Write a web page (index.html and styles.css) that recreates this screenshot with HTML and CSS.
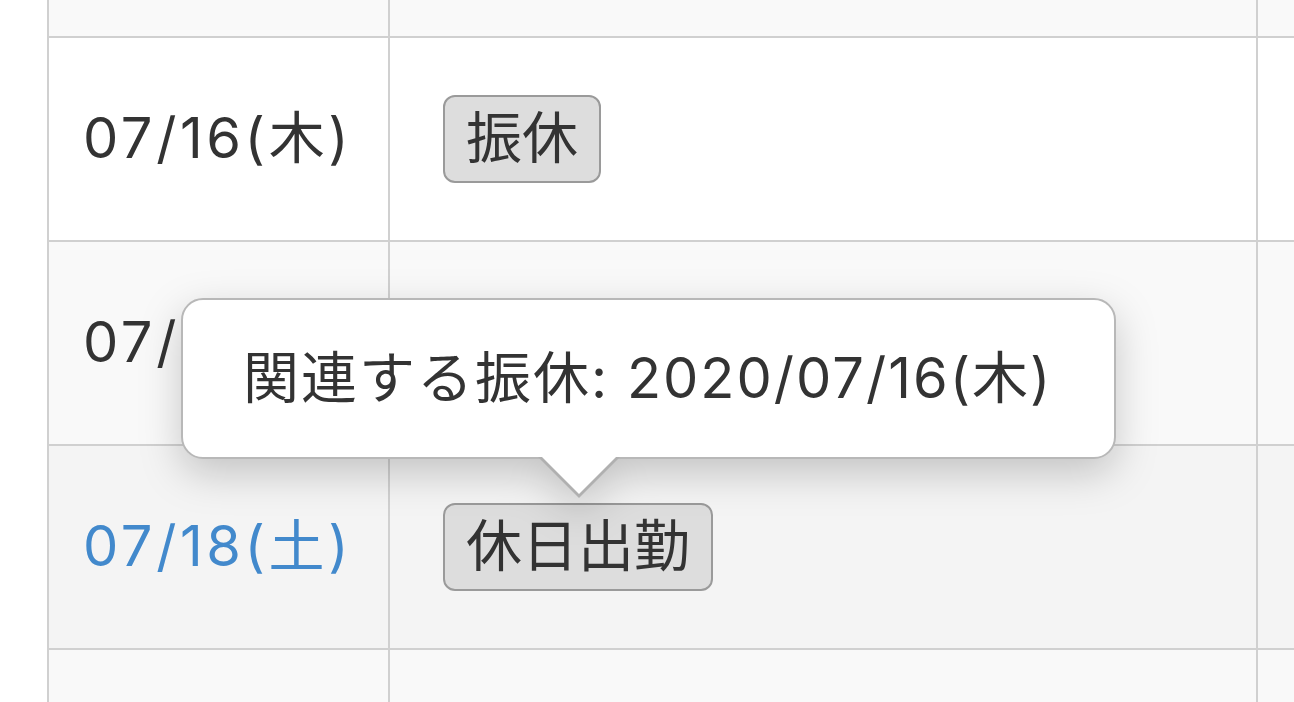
FILE: index.html
```html
<!DOCTYPE html>
<html lang="ja">
<head>
<meta charset="utf-8">
<title>勤務表</title>
<link rel="stylesheet" href="styles.css">
</head>
<body>
<div class="viewport">
  <table class="sheet">
    <colgroup>
      <col class="c-date">
      <col class="c-kind">
      <col class="c-rest">
    </colgroup>
    <tbody>
      <tr class="odd">
        <td class="date">07/15(水)</td>
        <td class="kind"></td>
        <td></td>
      </tr>
      <tr class="even">
        <td class="date">07/16(木)</td>
        <td class="kind"><span class="badge">振休</span></td>
        <td></td>
      </tr>
      <tr class="odd">
        <td class="date">07/17(金)</td>
        <td class="kind"></td>
        <td></td>
      </tr>
      <tr class="hover">
        <td class="date sat">07/18(土)</td>
        <td class="kind">
          <span class="badge-wrap">
            <span class="badge">休日出勤</span>
            <span class="tooltip">関連する振休: 2020/07/16(木)</span>
          </span>
        </td>
        <td></td>
      </tr>
      <tr class="odd">
        <td class="date sun">07/19(日)</td>
        <td class="kind"></td>
        <td></td>
      </tr>
    </tbody>
  </table>
</div>
</body>
</html>
```
FILE: styles.css
```css
html, body {
  margin: 0;
  padding: 0;
  background: #ffffff;
}
body {
  font-family: Inter, "Noto Sans CJK JP", sans-serif;
  color: #333333;
}
.viewport {
  width: 1294px;
  height: 702px;
  overflow: hidden;
  padding-left: 47px;
  box-sizing: border-box;
}
.sheet {
  border-collapse: collapse;
  table-layout: fixed;
  width: 1420px;
  margin-top: -168px;
}
.c-date { width: 341px; }
.c-kind { width: 868px; }
.c-rest { width: 211px; }
.sheet td {
  border: 2px solid #d0d0d0;
  height: 202px;
  padding: 0;
  vertical-align: middle;
  font-size: 56px;
  line-height: 1.2;
}
.odd td { background: #f9f9f9; }
.even td { background: #ffffff; }
.hover td { background: #f4f4f4; }
.date {
  padding-left: 34px !important;
  white-space: nowrap;
  letter-spacing: 3.6px;
}
.date.sat { color: #4289cc; }
.date.sun { color: #d9534f; }
.kind {
  padding-left: 53px !important;
}
.badge-wrap {
  position: relative;
  display: inline-block;
}
.badge {
  display: inline-block;
  background: #dddddd;
  border: 2px solid #9a9a9a;
  border-radius: 12px;
  padding: 8px 21px;
  font-size: 56px;
  line-height: 1.2;
  color: #333333;
}
.tooltip {
  position: absolute;
  left: -262px;
  bottom: calc(100% + 44px);
  white-space: nowrap;
  letter-spacing: 2px;
  background: #ffffff;
  border: 2px solid #b8b8b8;
  border-radius: 22px;
  padding: 45px 62px 45px 60px;
  line-height: 1.2;
  color: #333333;
  filter: drop-shadow(0 14px 20px rgba(0, 0, 0, 0.2));
}
.tooltip::before,
.tooltip::after {
  content: "";
  position: absolute;
  left: 355px;
  width: 0;
  height: 0;
  border-style: solid;
  border-color: transparent;
}
.tooltip::before {
  top: 100%;
  border-width: 41px 41px 0 41px;
  border-top-color: #b0b0b0;
}
.tooltip::after {
  top: calc(100% - 1px);
  margin-left: 3px;
  border-width: 38px 38px 0 38px;
  border-top-color: #ffffff;
}
```
